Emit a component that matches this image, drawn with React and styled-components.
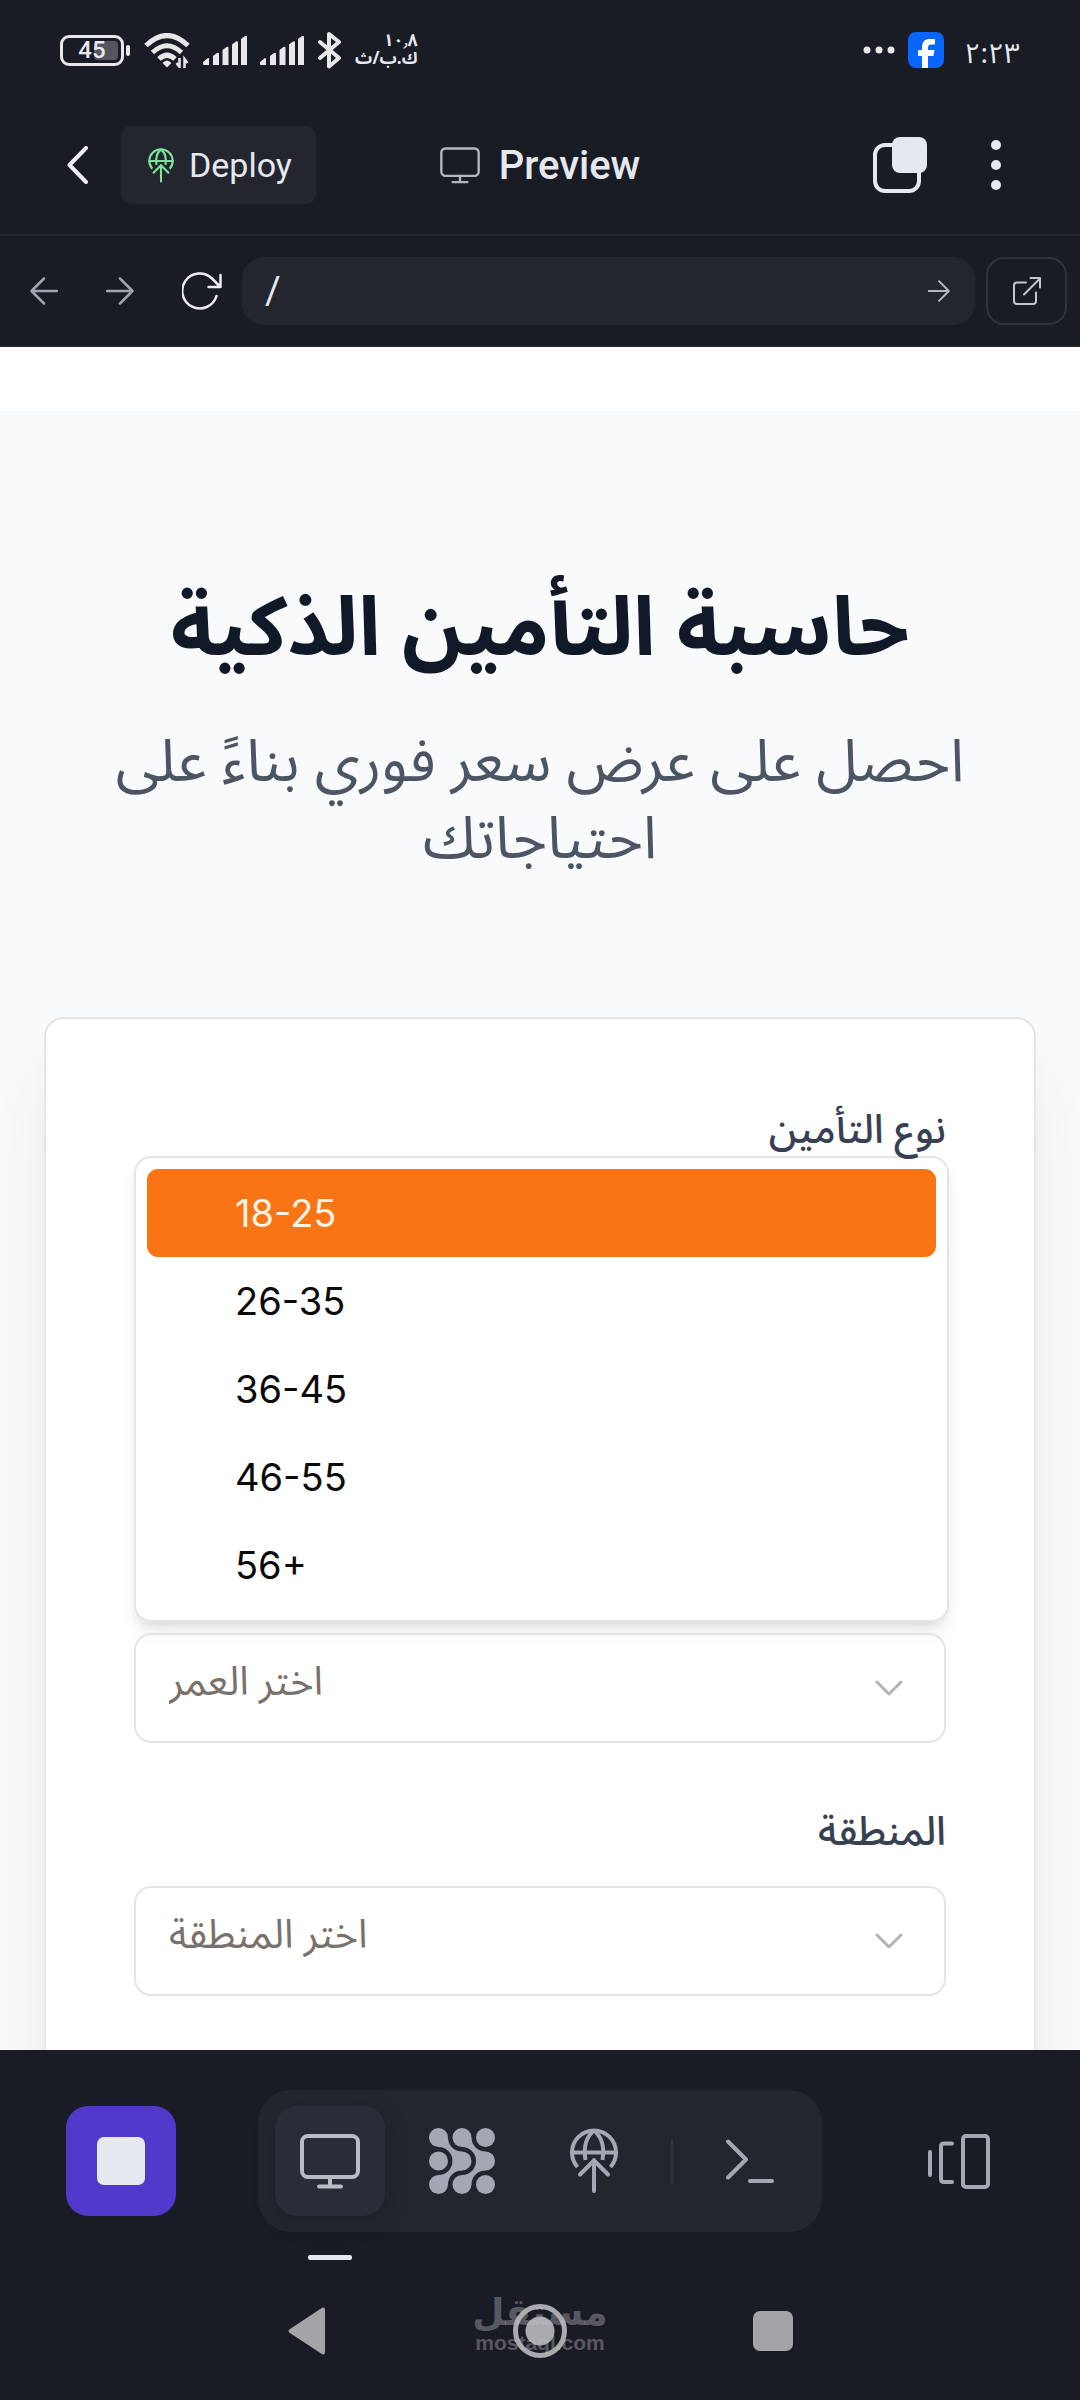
import React from 'react'
import styled, { createGlobalStyle } from 'styled-components'

const ages = ['18-25', '26-35', '36-45', '46-55', '56+']

const GlobalStyle = createGlobalStyle`
    * {
        box-sizing: border-box;
    }
    body {
        margin: 0;
        background: #1a1c25;
        font-family: Roboto, "Noto Sans Arabic", "Noto Sans", sans-serif;
    }
    button, select, input {
        font: inherit;
        color: inherit;
        border: none;
        background: none;
        padding: 0;
        margin: 0;
    }
    svg {
        display: block;
        flex-shrink: 0;
    }
`

const Signal = () => (
    <svg width="44" height="29" viewBox="0 0 44 29" fill="#e8e8ea">
        <path d="M0 26l5-4q1-.5 1 1v6H1q-1 0-1-1z" />
        <path d="M10 20l4-3q2-1 2 1v11h-6z" />
        <path d="M19.500 14l4-3q2-1 2 1v17h-6z" />
        <path d="M29 8.500l4-3q2-1 2 1V29h-6z" />
        <path d="M38 3l4-3q2-1 2 1v28h-6z" />
    </svg>
)

const Monitor = ({ w, h, color, stroke }) => (
    <svg width={w} height={h} viewBox="0 0 60 55" fill="none" stroke={color} strokeWidth={stroke} strokeLinecap="round" strokeLinejoin="round">
        <rect x="2" y="2" width="56" height="41" rx="6" />
        <path d="M30 43v9M19 52.500h22" />
    </svg>
)

const Globe = ({ w, h, color }) => (
    <svg width={w} height={h} viewBox="0 0 48 66" fill="none" stroke={color} strokeWidth="4" strokeLinecap="round" strokeLinejoin="round">
        <path d="M7.500 39A22 22 0 1 1 40.500 39" strokeLinecap="butt" />
        <path d="M2 24.500h44" />
        <path d="M24 2.500C16 9 13.500 20 15.500 32M24 2.500C32 9 34.500 20 32.500 32" strokeLinecap="butt" />
        <path d="M24 63V32M10 46.500l14-14 14 14" />
    </svg>
)

const Arrow = ({ size, back, color }) => (
    <svg width={size} height={size} viewBox="0 0 28 28" fill="none" stroke={color} strokeWidth="2.500" strokeLinecap="round" strokeLinejoin="round">
        {back ? <path d="M27 14H1.500M14 1.500L1.500 14 14 26.500" /> : <path d="M1 14h25.500M14 1.500L26.500 14 14 26.500" />}
    </svg>
)

const Chevron = () => (
    <svg width="28" height="16" viewBox="0 0 28 16" fill="none" stroke="#b4b4b4" strokeWidth="3" strokeLinecap="round" strokeLinejoin="round">
        <path d="M2 2l12 12L26 2" />
    </svg>
)

const dots = [9.5, 33, 56.5]

const App = () => {
    return (
        <Screen>
            <GlobalStyle />
            <StatusBar>
                <StatusGroup>
                    <Battery><Charge /><span>45</span></Battery>
                    <svg width="46" height="35" viewBox="0 0 46 35" fill="none" stroke="#e8e8ea" strokeWidth="5">
                        <path d="M2 12.500Q23-7.500 44 12.500M8.500 19.500Q23 6 37.500 19.500M15 26Q23 18.500 31 26" />
                        <path d="M18.500 30q4.500-5 9 0l-4.500 4.500z" fill="#e8e8ea" stroke="none" />
                        <path d="M35.500 25v9l-3-4M40.500 35v-9l3 4" strokeWidth="2.500" />
                    </svg>
                    <Signal />
                    <Signal />
                    <svg width="25" height="38" viewBox="0 0 25 38" fill="none" stroke="#e8e8ea" strokeWidth="4" strokeLinecap="round" strokeLinejoin="round">
                        <path d="M3 11l19 16-10 8.500V3L22 11 3 27" />
                    </svg>
                    <Speed><span>١٠٫٨</span><span>ك.ب/ث</span></Speed>
                </StatusGroup>
                <StatusGroup>
                    <svg width="32" height="8" viewBox="0 0 32 8" fill="#e8e8ea">
                        <circle cx="4" cy="4" r="3.500" /><circle cx="16" cy="4" r="3.500" /><circle cx="28" cy="4" r="3.500" />
                    </svg>
                    <svg width="36" height="36" viewBox="0 0 36 36">
                        <rect width="36" height="36" rx="8" fill="#0866ff" />
                        <path d="M14 36V24h-4v-6h4v-2.500C14 9.500 17 7 22 7h5v5.500h-3.500c-2.500 0-3.500 1-3.500 3V18h6.500l-1 6H20v12z" fill="#fff" />
                    </svg>
                    <Clock>٢:٢٣</Clock>
                </StatusGroup>
            </StatusBar>

            <Header>
                <HeaderSide>
                    <IconButton aria-label="Back">
                        <svg width="22" height="38" viewBox="0 0 22 38" fill="none" stroke="#eceef4" strokeWidth="4" strokeLinecap="round" strokeLinejoin="round">
                            <path d="M19 2L2.500 19 19 36" />
                        </svg>
                    </IconButton>
                    <DeployButton><Globe w={26} h={35} color="#7ee29a" />Deploy</DeployButton>
                </HeaderSide>
                <Title><Monitor w={40} h={37} color="#b4b7c0" stroke={3.5} />Preview</Title>
                <HeaderSide $end>
                    <IconButton aria-label="Copy">
                        <svg width="54" height="56" viewBox="0 0 54 56">
                            <rect x="2" y="8" width="44" height="46" rx="10" fill="none" stroke="#e6e8ef" strokeWidth="4" />
                            <rect x="19" y="0" width="35" height="36" rx="8" fill="#e6e8ef" />
                        </svg>
                    </IconButton>
                    <IconButton aria-label="More">
                        <svg width="10" height="50" viewBox="0 0 10 50" fill="#e6e8ef">
                            <circle cx="5" cy="5" r="5" /><circle cx="5" cy="25" r="5" /><circle cx="5" cy="45" r="5" />
                        </svg>
                    </IconButton>
                </HeaderSide>
            </Header>

            <Toolbar>
                <NavButtons>
                    <IconButton aria-label="Previous"><Arrow size={28} back color="#a0a4b0" /></IconButton>
                    <IconButton aria-label="Next"><Arrow size={28} color="#a0a4b0" /></IconButton>
                    <IconButton aria-label="Reload">
                        <svg width="40" height="38" viewBox="0 0 40 38" fill="none" stroke="#eceef4" strokeWidth="2.500" strokeLinecap="round" strokeLinejoin="round">
                            <path d="M34.500 24A17.500 17.500 0 1 1 30 6.500L38 14.500M38.500 3v12H26.500" />
                        </svg>
                    </IconButton>
                </NavButtons>
                <AddressBar>
                    <AddressInput aria-label="Address" defaultValue="/" />
                    <IconButton aria-label="Go"><Arrow size={22} color="#b4b7c0" /></IconButton>
                </AddressBar>
                <OpenButton aria-label="Open in new tab">
                    <svg width="28" height="28" viewBox="0 0 28 28" fill="none" stroke="#c4c7d0" strokeWidth="2" strokeLinecap="round" strokeLinejoin="round">
                        <path d="M13 5.500H4q-3 0-3 3V24q0 3 3 3h16q3 0 3-3v-8.500M11 17.500L27 1.500M17.500 1H27v9.500" />
                    </svg>
                </OpenButton>
            </Toolbar>

            <Page dir="rtl">
                <PageTop />
                <Hero>
                    <h1>حاسبة التأمين الذكية</h1>
                    <p>احصل على عرض سعر فوري بناءً على احتياجاتك</p>
                </Hero>
                <Card>
                    <Label as="span" id="type-label">نوع التأمين</Label>
                    <Options role="listbox" aria-labelledby="type-label" dir="ltr">
                        {ages.map((age, i) => (
                            <Option key={age} role="option" aria-selected={i === 0} $active={i === 0}>{age}</Option>
                        ))}
                    </Options>
                    <SelectBox dir="ltr">
                        <select aria-label="العمر">
                            <option>اختر العمر</option>
                        </select>
                        <Chevron />
                    </SelectBox>
                    <RegionLabel htmlFor="region">المنطقة</RegionLabel>
                    <SelectBox dir="ltr">
                        <select id="region">
                            <option>اختر المنطقة</option>
                        </select>
                        <Chevron />
                    </SelectBox>
                </Card>
            </Page>

            <Dock>
                <Tools>
                    <StopButton aria-label="Stop"><i /></StopButton>
                    <Tabs>
                        <Tab $active aria-label="Preview"><Monitor w={60} h={55} color="#b9bcc5" stroke={4} /></Tab>
                        <Tab aria-label="Agent">
                            <svg width="66" height="66" viewBox="0 0 66 66" fill="#a3a8b4">
                                {dots.map(x => dots.map(y => <circle key={x + '-' + y} cx={x} cy={y} r="9.500" />))}
                                <path id="down" d="M19 9.500A14 14 0 0 0 33 23.500L23.500 33A14 14 0 0 0 9.500 19Z" />
                                <use href="#down" x="23.500" />
                                <path id="up" d="M23.500 33A14 14 0 0 1 9.500 47L19 56.500A14 14 0 0 1 33 42.500Z" />
                                <use href="#up" x="23.500" />
                            </svg>
                        </Tab>
                        <Tab aria-label="Deploy"><Globe w={48} h={66} color="#a3a8b4" /></Tab>
                        <Divider />
                        <Tab aria-label="Shell">
                            <svg width="50" height="45" viewBox="0 0 50 45" fill="none" stroke="#a3a8b4" strokeWidth="4" strokeLinecap="round" strokeLinejoin="round">
                                <path d="M3 2.500l18 18-18 18M25 42h22" />
                            </svg>
                        </Tab>
                    </Tabs>
                    <DockEnd>
                        <IconButton aria-label="Switch tabs">
                            <svg width="62" height="55" viewBox="0 0 62 55" fill="none" stroke="#a3a8b4" strokeWidth="4" strokeLinecap="round" strokeLinejoin="round">
                                <path d="M2 18v23M24 9.500H16q-3 0-3 3V45q0 3 3 3h8" />
                                <rect x="35" y="2" width="25" height="51" rx="3" />
                            </svg>
                        </IconButton>
                    </DockEnd>
                </Tools>
                <SystemNav>
                    <IconButton aria-label="System back">
                        <svg width="38" height="48" viewBox="0 0 38 48" fill="#a3a4a8">
                            <path d="M33 1.500q4-2.500 4 1.500v42q0 4-4 1.500L2 26q-3-2 0-4z" />
                        </svg>
                    </IconButton>
                    <IconButton aria-label="Home">
                        <svg width="54" height="54" viewBox="0 0 54 54">
                            <circle cx="27" cy="27" r="24.500" fill="none" stroke="#a9aaad" strokeWidth="5" />
                            <circle cx="27" cy="27" r="14.500" fill="#a9aaad" />
                        </svg>
                    </IconButton>
                    <IconButton aria-label="Recent apps">
                        <svg width="40" height="40" viewBox="0 0 40 40" fill="#a3a4a8"><rect width="40" height="40" rx="7" /></svg>
                    </IconButton>
                    <Watermark><b>مستقل</b><span>mostaql.com</span></Watermark>
                </SystemNav>
            </Dock>
        </Screen>
    )
}

const Screen = styled.div`
    height: 100vh;
    display: flex;
    flex-direction: column;
    background: #1a1c25;
    color: #e6e8ef;
`
const StatusBar = styled.div`
    height: 96px;
    flex-shrink: 0;
    padding: 4px 60px 0;
    display: flex;
    align-items: center;
    justify-content: space-between;
`
const StatusGroup = styled.div`
    display: flex;
    align-items: center;
    gap: 13px;
`
const Battery = styled.div`
    width: 64px;
    height: 31px;
    margin-right: 7px;
    border: 3px solid #e8e8ea;
    border-radius: 9px;
    position: relative;
    display: flex;
    align-items: center;
    justify-content: center;
    font-size: 24px;
    font-weight: 500;
    line-height: 24px;

    span {
        position: relative;
    }
    &::after {
        content: "";
        position: absolute;
        right: -9px;
        top: 7px;
        width: 4px;
        height: 11px;
        border-radius: 2px;
        background: #e8e8ea;
    }
`
const Charge = styled.i`
    position: absolute;
    right: 3px;
    top: 3px;
    bottom: 3px;
    width: 24px;
    border-radius: 4px;
    background: #55565d;
`
const Speed = styled.div`
    display: flex;
    flex-direction: column;
    align-items: flex-end;
    font-family: "Noto Sans Arabic", sans-serif;
    font-weight: 700;
    font-size: 17px;
    line-height: 18px;
`
const Clock = styled.time`
    font-family: "Noto Sans Arabic", sans-serif;
    font-size: 28px;
    line-height: 36px;
    margin-left: 7px;
    padding-top: 10px;
`
const Header = styled.header`
    height: 140px;
    flex-shrink: 0;
    padding: 0 67px;
    border-bottom: 2px solid #24262f;
    display: grid;
    grid-template-columns: 1fr auto 1fr;
    align-items: center;
`
const HeaderSide = styled.div`
    display: flex;
    align-items: center;
    justify-content: ${p => (p.$end ? 'flex-end' : 'flex-start')};
    gap: ${p => (p.$end ? '64px' : '32px')};
    padding-right: ${p => (p.$end ? '12px' : '0')};
`
const IconButton = styled.button`
    cursor: pointer;
`
const DeployButton = styled.button`
    height: 78px;
    padding: 0 24px 0 27px;
    border-radius: 10px;
    background: #23262f;
    display: flex;
    align-items: center;
    gap: 15px;
    font-size: 34px;
    cursor: pointer;
`
const Title = styled.h2`
    margin: 0;
    display: flex;
    align-items: center;
    gap: 19px;
    font-size: 40px;
    font-weight: 500;
`
const Toolbar = styled.div`
    height: 111px;
    flex-shrink: 0;
    padding: 0 13px 0 30px;
    border-bottom: 2px solid #24262f;
    display: flex;
    align-items: center;
`
const NavButtons = styled.div`
    display: flex;
    align-items: center;
    gap: 48px;
    margin-right: 20px;
`
const AddressBar = styled.div`
    flex: 1;
    height: 68px;
    padding: 0 25px 0 23px;
    border-radius: 22px;
    background: #23262f;
    display: flex;
    align-items: center;
`
const AddressInput = styled.input`
    flex: 1;
    min-width: 0;
    font-size: 38px;
    outline: none;
`
const OpenButton = styled.button`
    width: 81px;
    height: 68px;
    margin-left: 11px;
    border: 2px solid #2f313b;
    border-radius: 18px;
    display: grid;
    place-items: center;
    cursor: pointer;
`
const Page = styled.main`
    flex: 1;
    min-height: 0;
    overflow: hidden;
    background: #f9fafb;
    font-family: "Noto Sans Arabic", "Noto Sans", sans-serif;
`
const PageTop = styled.div`
    height: 64px;
    background: #fff;
`
const Hero = styled.section`
    padding: 163px 88px 139px;
    text-align: center;

    h1 {
        margin: 0 0 40px;
        font-size: 82px;
        line-height: 110px;
        font-weight: 700;
        color: #111827;
    }
    p {
        margin: 0;
        font-size: 59px;
        line-height: 77px;
        color: #4b5563;
    }
`
const Card = styled.section`
    margin: 0 44px;
    padding: 86px 88px 120px;
    border: 2px solid #e5e5e5;
    border-radius: 20px;
    background: #fff;
    box-shadow: 0 55px 69px -14px rgba(0, 0, 0, 0.1), 0 22px 27px -16px rgba(0, 0, 0, 0.1);
`
const Label = styled.label`
    display: block;
    font-size: 40px;
    line-height: 51px;
    font-weight: 500;
    color: #374151;
`
const RegionLabel = styled(Label)`
    margin: 64px 0 28px;
`
const Options = styled.ul`
    list-style: none;
    width: calc(100% + 3px);
    margin: 0 -3px 11px 0;
    padding: 11px;
    border: 2px solid #e5e5e5;
    border-radius: 17px;
    box-shadow: 0 11px 17px -3px rgba(0, 0, 0, 0.1), 0 6px 11px -6px rgba(0, 0, 0, 0.1);
`
const Option = styled.li`
    height: 88px;
    padding-left: 88px;
    border-radius: 11px;
    display: flex;
    align-items: center;
    font-family: Inter, sans-serif;
    font-size: 38px;
    background: ${p => (p.$active ? '#f97415' : 'transparent')};
    color: ${p => (p.$active ? '#fff3e3' : '#0c0a09')};
`
const SelectBox = styled.div`
    height: 110px;
    border: 2px solid #e5e5e5;
    border-radius: 17px;
    display: grid;
    align-items: center;

    select, svg {
        grid-area: 1 / 1;
    }
    select {
        appearance: none;
        height: 106px;
        padding: 0 80px 12px 33px;
        font-size: 40px;
        color: #78716c;
        outline: none;
    }
    svg {
        justify-self: end;
        margin-right: 41px;
        pointer-events: none;
    }
`
const Dock = styled.footer`
    flex-shrink: 0;
    height: 350px;
    padding-top: 40px;
    background: #1a1c25;
`
const Tools = styled.div`
    padding: 0 90px 0 66px;
    display: grid;
    grid-template-columns: 192px auto 1fr;
    align-items: center;
`
const StopButton = styled.button`
    width: 110px;
    height: 110px;
    border-radius: 22px;
    background: #5139cb;
    display: grid;
    place-items: center;
    cursor: pointer;

    i {
        width: 48px;
        height: 48px;
        border-radius: 7px;
        background: #e6e8ef;
    }
`
const Tabs = styled.nav`
    height: 142px;
    padding: 0 17px;
    border-radius: 33px;
    background: #23262f;
    display: flex;
    align-items: center;
    gap: 22px;
`
const Tab = styled.button`
    position: relative;
    width: 110px;
    height: 110px;
    border-radius: 22px;
    display: grid;
    place-items: center;
    cursor: pointer;
    ${p => p.$active && `
        background: #2a2c38;
        box-shadow: 0 6px 24px rgba(0, 0, 0, 0.2);

        &::after {
            content: "";
            position: absolute;
            left: 33px;
            bottom: -44px;
            width: 44px;
            height: 5px;
            border-radius: 2px;
            background: #e6e8ef;
        }
    `}
`
const Divider = styled.span`
    width: 2px;
    height: 45px;
    background: #30333d;
`
const DockEnd = styled.div`
    display: flex;
    justify-content: flex-end;
`
const SystemNav = styled.div`
    position: relative;
    max-width: 700px;
    margin: 72px auto 0;
    display: grid;
    grid-template-columns: repeat(3, 1fr);
    place-items: center;
`
const Watermark = styled.div`
    position: absolute;
    left: 0;
    right: 0;
    top: -11px;
    display: flex;
    flex-direction: column;
    align-items: center;
    color: rgba(190, 190, 195, 0.4);
    font-weight: 700;
    pointer-events: none;

    b {
        font-family: "DejaVu Sans", sans-serif;
        font-size: 37px;
        line-height: 40px;
    }
    span {
        font-family: "Liberation Sans", sans-serif;
        font-size: 21px;
        line-height: 20px;
    }
`

export default App
